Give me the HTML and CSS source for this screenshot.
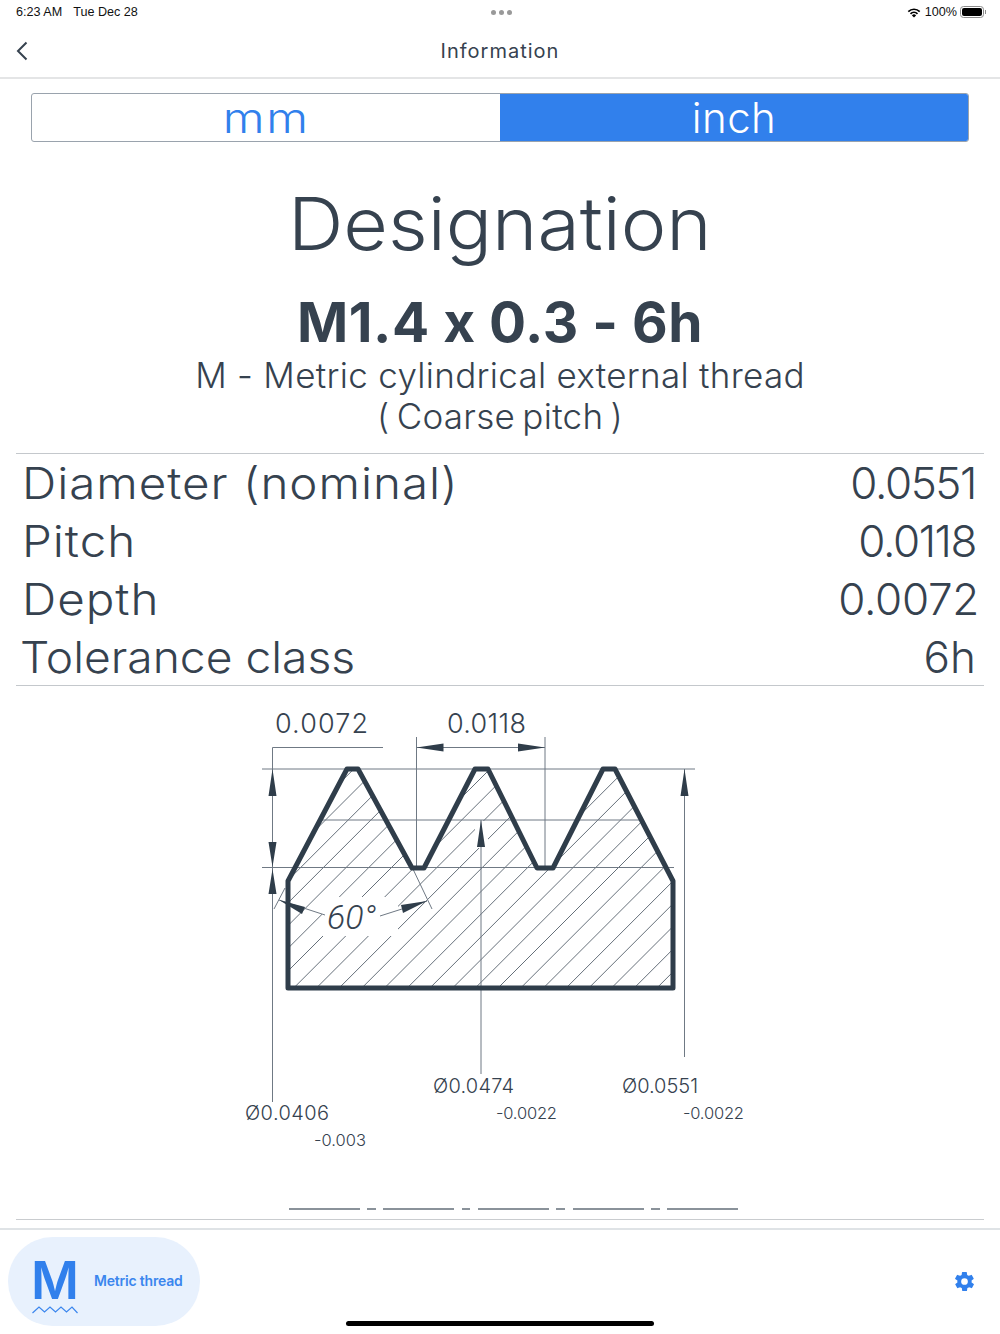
FILE: index.html
```html
<!DOCTYPE html>
<html lang="en">
<head>
<meta charset="utf-8">
<title>Information</title>
<link rel="stylesheet" href="styles.css">
</head>
<body>
<div class="page">
  <header class="status">
    <div class="status-left"><span>6:23 AM</span><span>Tue Dec 28</span></div>
    <div class="status-dots"><i></i><i></i><i></i></div>
    <div class="status-right">
      <svg class="wifi" viewBox="0 0 14 11" width="14" height="11"><path d="M7 10.600 4.900 8.400a3 3 0 0 1 4.200 0Z" fill="#000"/><path d="M3.500 6.900a5 5 0 0 1 7 0M1.300 4.600a8.100 8.100 0 0 1 11.400 0" fill="none" stroke="#000" stroke-width="1.700"/></svg>
      <span>100%</span>
      <div class="battery"><div class="battery-fill"></div></div><div class="battery-tip"></div>
    </div>
  </header>
  <nav class="nav">
    <svg class="back" viewBox="0 0 12 20" width="12" height="20"><path d="M10.500 1.500 2 10l8.500 8.500" fill="none" stroke="#36424f" stroke-width="2"/></svg>
    <h1 class="nav-title">Information</h1>
  </nav>
  <div class="segment">
    <div class="seg-item"><span class="seg-mm">mm</span></div>
    <div class="seg-item seg-active"><span>inch</span></div>
  </div>
  <h2 class="title"><span>Designation</span></h2>
  <div class="code">M1.4 x 0.3 - 6h</div>
  <p class="desc">M - Metric cylindrical external thread<br><span class="desc-note">( Coarse pitch )</span></p>
  <div class="rows">
    <div class="row"><span class="label">Diameter (nominal)</span><span class="value value-tight">0.0551</span></div>
    <div class="row"><span class="label">Pitch</span><span class="value value-tight">0.0118</span></div>
    <div class="row"><span class="label">Depth</span><span class="value value-depth">0.0072</span></div>
    <div class="row"><span class="label label-tol">Tolerance class</span><span class="value">6h</span></div>
  </div>
  <svg class="diagram" viewBox="0 686 1000 514" width="1000" height="514">
    <defs><clipPath id="body"><path d="M288 988V881L347 769H358L412 868H424L475 769H488L537 868H553L603 769H615L673 881V988Z"/></clipPath></defs>
    <g clip-path="url(#body)">
      <path class="hatch" d="M250 850.1l450-450M250 872.8l450-450M250 895.5l450-450M250 918.2l450-450M250 940.9l450-450M250 963.6l450-450M250 986.3l450-450M250 1009l450-450M250 1031.7l450-450M250 1054.4l450-450M250 1077.1l450-450M250 1099.8l450-450M250 1122.5l450-450M250 1145.2l450-450M250 1167.9l450-450M250 1190.6l450-450M250 1213.3l450-450M250 1236l450-450M250 1258.7l450-450M250 1281.4l450-450M250 1304.1l450-450M250 1326.8l450-450M250 1349.5l450-450M250 1372.2l450-450M250 1394.9l450-450"/>
    </g>
    <rect class="knock" x="322" y="897" width="76" height="39"/>
    <rect class="knock" x="475" y="821" width="13" height="27"/>
    <path class="dim" d="M262 769H695M262 867.5H674M322 820H640M272.5 1102V747.5H383M416.5 737V868M545 737V868M416.5 747.5H545M481 820V1074M684.5 769V1057M412 867 432 909M285 888 274 909M279 900 325 915M427 901 380 916"/>
    <path class="arrow" d="M272.5 769l-4 27h8ZM272.5 867l-4-25h8ZM272.5 869l-4 25h8ZM416.5 747.500l27-4v8ZM545 747.500l-27-4v8ZM481 820l-4 27h8ZM684.500 769l-4 27h8ZM279 900l26 7-3 7ZM427 901l-26 4 2 8Z"/>
    <path class="profile" d="M288 988V881L347 769H358L412 868H424L475 769H488L537 868H553L603 769H615L673 881V988Z"/>
    <text class="angle" x="327" y="929">60°</text>
    <text class="lbl-lg" x="275" y="733" textLength="93">0.0072</text>
    <text class="lbl-lg" x="447" y="733" textLength="79">0.0118</text>
    <text class="lbl-md" x="433" y="1093" textLength="81">Ø0.0474</text>
    <text class="lbl-md" x="622" y="1093" textLength="76">Ø0.0551</text>
    <text class="lbl-md" x="245" y="1120" textLength="84">Ø0.0406</text>
    <text class="lbl-sm" x="496" y="1119" textLength="61">-0.0022</text>
    <text class="lbl-sm" x="683" y="1119" textLength="61">-0.0022</text>
    <text class="lbl-sm" x="314" y="1146" textLength="52">-0.003</text>
  </svg>
  <div class="code-line"><i class="long"></i><i class="short"></i><i class="long"></i><i class="short"></i><i class="long"></i><i class="short"></i><i class="long"></i><i class="short"></i><i class="long"></i></div>
  <div class="rule"></div>
  <footer class="tabbar">
    <div class="pill">
      <div class="logo">
        <span class="logo-m">M</span>
        <svg class="zigzag" viewBox="0 0 46 8" width="46" height="8"><path d="M.5 7 7 1l5.500 5 5.500-5 5.500 5 5.500-5 5.500 5 5.500-5 5.500 6" fill="none" stroke="#3b86ee" stroke-width="1.200"/></svg>
      </div>
      <span class="pill-label">Metric thread</span>
    </div>
    <svg class="gear" viewBox="0 0 24 24" width="23" height="23"><path fill="#3180ec" d="M19.400 13a7.500 7.500 0 0 0 0-2l2.100-1.600a.5.5 0 0 0 .1-.6l-2-3.500a.5.5 0 0 0-.6-.2l-2.500 1a7.300 7.300 0 0 0-1.700-1l-.4-2.700a.5.5 0 0 0-.5-.4h-4a.5.5 0 0 0-.5.4l-.4 2.700a7.300 7.300 0 0 0-1.700 1l-2.500-1a.5.5 0 0 0-.6.2l-2 3.500a.5.5 0 0 0 .1.600L4.600 11a7.500 7.500 0 0 0 0 2l-2.100 1.600a.5.5 0 0 0-.1.6l2 3.500c.1.200.4.300.6.200l2.500-1c.5.400 1.100.7 1.700 1l.4 2.700c0 .2.200.4.500.4h4c.3 0 .5-.2.500-.4l.4-2.700c.6-.3 1.200-.6 1.700-1l2.500 1c.2.100.5 0 .6-.2l2-3.500a.5.5 0 0 0-.1-.6ZM12 15.500a3.500 3.500 0 1 1 0-7 3.500 3.500 0 0 1 0 7Z"/></svg>
  </footer>
  <div class="home"></div>
</div>
</body>
</html>
```
FILE: styles.css
```css
* { box-sizing: border-box; }
html, body { margin: 0; padding: 0; background: #fff; }
.page {
  position: relative;
  width: 1000px;
  height: 1334px;
  overflow: hidden;
  display: flex;
  flex-direction: column;
  color: #36424f;
  font-family: "Inter", "Liberation Sans", sans-serif;
  font-weight: 300;
}
.status {
  height: 24px;
  flex: none;
  display: grid;
  grid-template-columns: 1fr auto 1fr;
  align-items: center;
  padding: 0 14px 0 16px;
  font-family: "Liberation Sans", sans-serif;
  font-size: 12.6px;
  font-weight: 400;
  color: #111;
}
.status-left { display: flex; gap: 11px; }
.status-dots { display: flex; gap: 3px; }
.status-dots i { width: 5px; height: 5px; border-radius: 50%; background: #999; }
.status-right { display: flex; align-items: center; justify-content: flex-end; }
.status-right span { margin: 0 3px 0 4px; }
.battery {
  width: 24px;
  height: 12px;
  border: 1px solid #8c8c8c;
  border-radius: 3.5px;
  padding: 1px;
}
.battery-fill { width: 100%; height: 100%; background: #000; border-radius: 2px; }
.battery-tip { width: 1px; height: 4px; background: #8c8c8c; margin-left: 1px; }
.nav {
  height: 55px;
  flex: none;
  display: grid;
  grid-template-columns: 1fr auto 1fr;
  align-items: center;
  padding: 1px 16px 0;
  border-bottom: 2px solid #e4e5e6;
}
.back { display: block; }
.nav-title {
  grid-column: 2;
  margin: 0;
  font-size: 20px;
  font-weight: 400;
  letter-spacing: 1px;
}
.segment {
  flex: none;
  margin: 14px 31px 0;
  height: 49px;
  display: grid;
  grid-template-columns: 1fr 1fr;
  grid-template-rows: 47px;
  border: 1px solid #9aa3ad;
  border-radius: 3px;
  overflow: hidden;
  font-size: 42px;
  line-height: 47px;
}
.seg-item {
  display: flex;
  align-items: center;
  justify-content: center;
  color: #3180ec;
  letter-spacing: .5px;
}
.seg-mm { display: inline-block; letter-spacing: 1.5px; transform: scaleX(1.14); }
.seg-active { background: #3180ec; color: #fff; }
.title {
  flex: none;
  margin: 37px 0 1px;
  height: 90px;
  line-height: 90px;
  text-align: center;
  font-size: 73px;
  font-weight: 300;
}
.title span { display: inline-block; transform: scaleX(1.055); }
.code {
  flex: none;
  margin-top: 20px;
  height: 65px;
  line-height: 65px;
  text-align: center;
  font-size: 55px;
  font-weight: 700;
  letter-spacing: 0.5px;
}
.desc {
  flex: none;
  margin: 0;
  height: 98px;
  padding-bottom: 16px;
  line-height: 41px;
  text-align: center;
  font-size: 35px;
  letter-spacing: .3px;
}
.desc-note { word-spacing: -3px; }
.rows {
  flex: none;
  margin: 0 16px;
  height: 233px;
  border-top: 1px solid #c4c8cc;
  border-bottom: 1px solid #c4c8cc;
}
.row {
  height: 58px;
  display: flex;
  justify-content: space-between;
  align-items: center;
  padding: 0 8px 0 6px;
  font-size: 44px;
}
.label { letter-spacing: .9px; transform: scaleX(1.08); transform-origin: left center; }
.label-tol { margin-left: -2px; letter-spacing: 0; transform: scaleX(1.05); }
.value-tight { letter-spacing: -1.4px; }
.value-depth { letter-spacing: -.3px; margin-right: -3px; }
.diagram { display: block; flex: none; }
.hatch { fill: none; stroke: #55606b; stroke-width: .9; }
.knock { fill: #fff; }
.dim { fill: none; stroke: #6f7984; stroke-width: 1; }
.arrow { fill: #2f3d4a; }
.profile { fill: none; stroke: #2f3d4a; stroke-width: 5; stroke-linejoin: round; }
.angle { font-family: "Roboto", sans-serif; font-style: italic; font-weight: 300; font-size: 34px; fill: #36424f; }
.lbl-lg { font-size: 27px; fill: #36424f; font-weight: 300; }
.lbl-md { font-size: 20px; fill: #36424f; font-weight: 300; }
.lbl-sm { font-size: 16.5px; fill: #36424f; font-weight: 300; }
.code-line {
  flex: none;
  margin: 8px 0 0 288.5px;
  display: flex;
  gap: 7.6px;
  height: 2px;
}
.code-line i { display: block; height: 2px; background: #8a929a; }
.code-line .long { width: 71px; }
.code-line .short { width: 8.5px; }
.rule {
  flex: none;
  margin: 9px 16px 0;
  height: 1px;
  background: #c9cccf;
}
.tabbar {
  flex: none;
  margin-top: 8px;
  height: 106px;
  border-top: 2px solid #dfe3e6;
  display: flex;
  justify-content: space-between;
  padding: 7px 24px 0 8px;
  align-items: flex-start;
}
.pill {
  width: 192px;
  height: 89px;
  border-radius: 44.5px;
  background: #e8f1fd;
  display: flex;
  align-items: center;
  padding-left: 24px;
  gap: 15px;
}
.logo { display: flex; flex-direction: column; align-items: center; width: 46px; padding-top: 8px; }
.logo-m {
  font-family: "Inter", sans-serif;
  font-weight: 600;
  font-size: 52px;
  line-height: 48px;
  color: #3180ec;
}
.zigzag { display: block; margin-top: 1px; }
.pill-label {
  font-family: "Inter", sans-serif;
  font-size: 14px;
  font-weight: 600;
  letter-spacing: -.2px;
  padding-bottom: 2px;
  margin-left: 1px;
  color: #3b86ee;
}
.gear { display: block; margin-top: 33px; }
.home {
  position: absolute;
  left: 346px;
  top: 1321px;
  width: 308px;
  height: 5px;
  border-radius: 3px;
  background: #000;
}
```
